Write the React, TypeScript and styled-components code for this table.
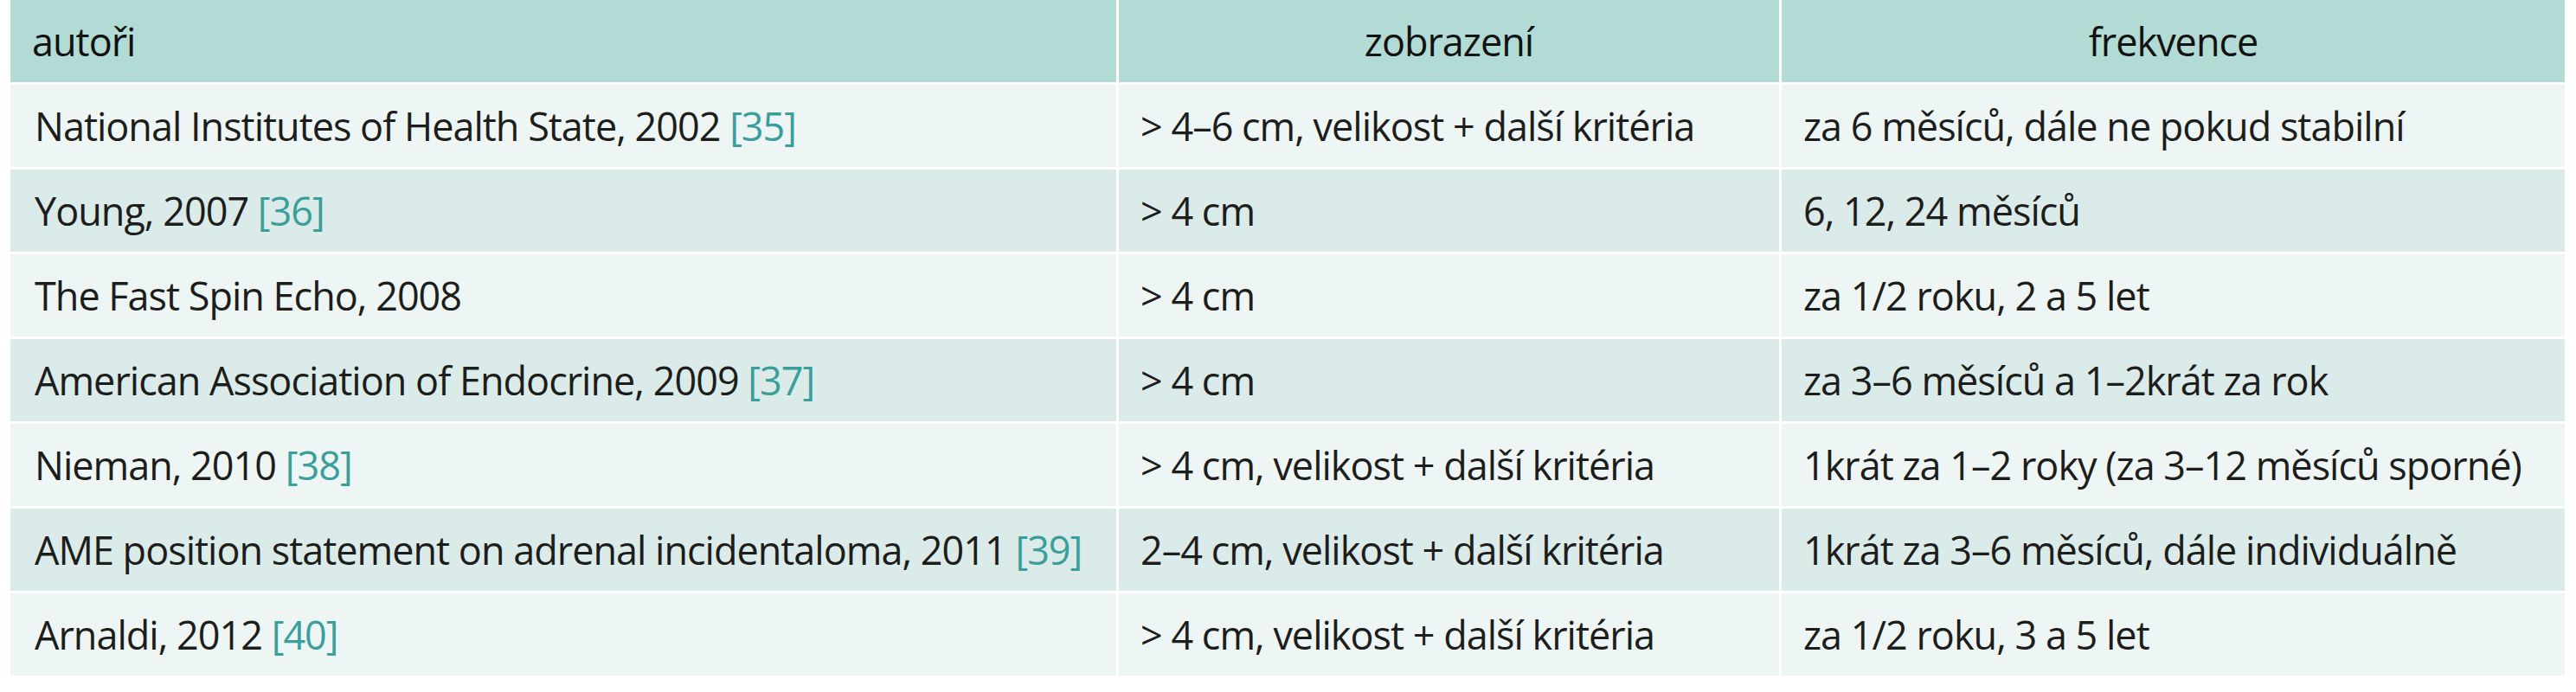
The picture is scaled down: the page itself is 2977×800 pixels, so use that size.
import styled, { createGlobalStyle } from 'styled-components';

type Row = {
  author: string;
  ref?: string;
  imaging: string;
  frequency: string;
};

const rows: Row[] = [
  {
    author: 'National Institutes of Health State, 2002',
    ref: '[35]',
    imaging: '> 4–6 cm, velikost + další kritéria',
    frequency: 'za 6 měsíců, dále ne pokud stabilní',
  },
  { author: 'Young, 2007', ref: '[36]', imaging: '> 4 cm', frequency: '6, 12, 24 měsíců' },
  { author: 'The Fast Spin Echo, 2008', imaging: '> 4 cm', frequency: 'za 1/2 roku, 2 a 5 let' },
  {
    author: 'American Association of Endocrine, 2009',
    ref: '[37]',
    imaging: '> 4 cm',
    frequency: 'za 3–6 měsíců a 1–2krát za rok',
  },
  {
    author: 'Nieman, 2010',
    ref: '[38]',
    imaging: '> 4 cm, velikost + další kritéria',
    frequency: '1krát za 1–2 roky (za 3–12 měsíců sporné)',
  },
  {
    author: 'AME position statement on adrenal incidentaloma, 2011',
    ref: '[39]',
    imaging: '2–4 cm, velikost + další kritéria',
    frequency: '1krát za 3–6 měsíců, dále individuálně',
  },
  {
    author: 'Arnaldi, 2012',
    ref: '[40]',
    imaging: '> 4 cm, velikost + další kritéria',
    frequency: 'za 1/2 roku, 3 a 5 let',
  },
];

const colors = {
  header: '#b3dbd6',
  rowLight: '#edf6f5',
  rowDark: '#dbebe9',
  text: '#1d1d1b',
  ref: '#3a9e9b',
};

type Tone = 'header' | 'light' | 'dark';

const App = () => {
  return (
    <>
      <GlobalStyle />
      <Page>
        <Table>
          <TableRow>
            <Cell $tone="header">
              <HeadText>autoři</HeadText>
            </Cell>
            <Cell $tone="header" $center>
              <HeadText>zobrazení</HeadText>
            </Cell>
            <Cell $tone="header" $center>
              <HeadText>frekvence</HeadText>
            </Cell>
          </TableRow>
          {rows.map((row, i) => {
            const tone: Tone = i % 2 === 0 ? 'light' : 'dark';
            return (
              <TableRow key={row.author}>
                <Cell $tone={tone} $first>
                  {row.author}
                  {row.ref && <Ref> {row.ref}</Ref>}
                </Cell>
                <Cell $tone={tone}>{row.imaging}</Cell>
                <Cell $tone={tone}>{row.frequency}</Cell>
              </TableRow>
            );
          })}
        </Table>
      </Page>
    </>
  );
};

const GlobalStyle = createGlobalStyle`
  html, body {
    margin: 0;
    padding: 0;
    background: #ffffff;
  }
  body {
    font-family: "Open Sans", "Noto Sans", "Liberation Sans", sans-serif;
    color: ${colors.text};
  }
`;

const Page = styled.div`
  width: 2977px;
  padding: 0 13px 0 12px;
  box-sizing: border-box;
`;

const Table = styled.div`
  width: 2952px;
  display: flex;
  flex-direction: column;
  gap: 3px;
  background: #ffffff;
`;

const TableRow = styled.div`
  display: grid;
  grid-template-columns: 1278px 763px 905px;
  column-gap: 3px;
  height: 95px;
`;

const Cell = styled.div<{ $tone: Tone; $center?: boolean; $first?: boolean }>`
  display: flex;
  align-items: center;
  justify-content: ${(p) => (p.$center ? 'center' : 'flex-start')};
  padding: 0 ${(p) => (p.$center ? '0' : '20px')} 0 ${(p) => (p.$center ? '0' : p.$first ? '28px' : '25px')};
  background: ${(p) =>
    p.$tone === 'header' ? colors.header : p.$tone === 'dark' ? colors.rowDark : colors.rowLight};
  font-size: 45px;
  letter-spacing: -1px;
  white-space: pre;
  line-height: 1;
`;

const HeadText = styled.span`
  font-weight: 400;
  color: #121210;
`;

const Ref = styled.span`
  color: ${colors.ref};
`;

export default App;
